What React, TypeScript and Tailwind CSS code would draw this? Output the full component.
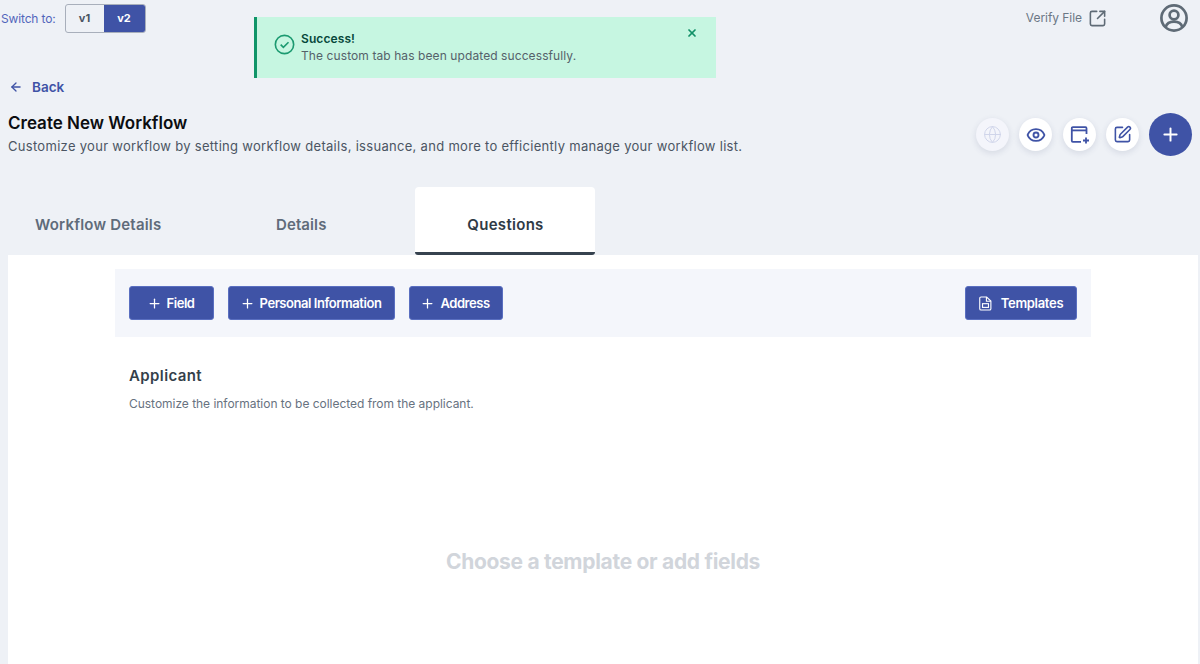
import { ArrowLeft, Eye, Globe, Plus, SquareArrowOutUpRight, SquarePen, X } from "lucide-react";

const font = "font-['Inter','Liberation_Sans',sans-serif]";

function AddButton({ label, className }: { label: string; className: string }) {
  return (
    <button
      className={`flex h-[34px] items-center justify-center gap-[5px] rounded-[3px] border border-[#5a6fc0] bg-[#3f53a6] pr-[2px] pt-[1px] text-[13px] font-semibold tracking-[-0.45px] text-white ${className}`}
    >
      <Plus className="size-[15px]" strokeWidth={2} aria-hidden="true" />
      {label}
    </button>
  );
}

function RoundAction({ children, muted }: { children: React.ReactNode; muted?: boolean }) {
  return (
    <span
      className={`flex size-[33px] items-center justify-center rounded-full shadow-[0_2px_6px_rgba(60,70,110,0.14)] ${
        muted ? "bg-[#f4f5fb] text-[#cfd4ea]" : "bg-white text-[#3f53a6]"
      }`}
    >
      {children}
    </span>
  );
}

function UserCircle() {
  return (
    <svg viewBox="0 0 28 28" className="size-[28px]" fill="none" stroke="#5f6b76" strokeWidth="2.7" aria-hidden="true">
      <circle cx="14" cy="14" r="12.6" />
      <circle cx="14" cy="11" r="4.4" />
      <path d="M5.6 23c1.2-3.6 4.4-5.4 8.4-5.4s7.2 1.8 8.4 5.4" />
    </svg>
  );
}

function FolderPlus() {
  return (
    <svg viewBox="0 0 20 20" className="size-[20px]" fill="none" stroke="currentColor" strokeWidth="1.8" aria-hidden="true">
      <path d="M16.5 9V3.2a1 1 0 0 0-1-1H2.8a1 1 0 0 0-1 1v12.6a1 1 0 0 0 1 1H11" />
      <path d="M1.8 5.4h14.7" />
      <path d="M16 12.5v6M13 15.5h6" />
    </svg>
  );
}

function TemplateIcon() {
  return (
    <svg viewBox="0 0 14 16" className="h-[15px] w-[13px]" fill="none" stroke="white" strokeWidth="1.2" aria-hidden="true">
      <path d="M2.2 1h6l4.6 4.4v8.2a1.4 1.4 0 0 1-1.4 1.4H2.2a1.4 1.4 0 0 1-1.4-1.4V2.4A1.4 1.4 0 0 1 2.2 1Z" />
      <path d="M8 1v4.6h4.8" />
      <rect x="3.8" y="8.2" width="6.4" height="4" />
    </svg>
  );
}

export default function App() {
  return (
    <div className={`${font} relative h-[664px] w-[1200px] overflow-hidden bg-[#eef1f6]`}>
      {/* top bar */}
      <header className="flex h-[37px] items-start justify-between pl-[1px] pr-[12px] pt-[4px]">
        <div className="flex items-center gap-[9px]">
          <span className="text-[12px] tracking-[-0.15px] text-[#5266bb]">Switch to:</span>
          <div className="flex h-[29px] overflow-hidden rounded-[3px] border border-[#a8afbb] text-[11px] font-bold">
            <span className="flex w-[38px] items-center justify-center text-[#4a5563]">v1</span>
            <span className="flex w-[41px] items-center justify-center bg-[#3f53a6] text-white">v2</span>
          </div>
        </div>
        <div className="flex items-center">
          <span className="text-[12px] tracking-[-0.05px] text-[#6b7785]">Verify File</span>
          <SquareArrowOutUpRight className="ml-[6px] size-[19px] text-[#5f6b76]" strokeWidth={2} aria-hidden="true" />
          <span className="ml-[53px]"><UserCircle /></span>
        </div>
      </header>

      {/* toast */}
      <div className="absolute left-[254px] top-[17px] flex h-[61px] w-[462px] border-l-[3px] border-[#0f9568] bg-[#c6f6e1] pl-[17px] pt-[13px]">
        <svg viewBox="0 0 22 22" className="mt-[4px] size-[21px]" fill="none" stroke="#1b9a70" strokeWidth="1.7" aria-hidden="true">
          <circle cx="11" cy="11" r="9.6" />
          <path d="M7 11.2l2.8 2.8L15.2 8.6" />
        </svg>
        <div className="ml-[6px] text-[12px] leading-[17px]">
          <p className="font-semibold tracking-[0.1px] text-[#06483a]">Success!</p>
          <p className="tracking-[0.09px] text-[#55616a]">The custom tab has been updated successfully.</p>
        </div>
        <X className="absolute right-[18px] top-[10px] size-[12px] text-[#129068]" strokeWidth={3.5} aria-hidden="true" />
      </div>

      {/* back link + title */}
      <div className="mt-[41px] flex items-center gap-[9px] pl-[9px] text-[13.5px] font-semibold leading-[18px] text-[#3f53a6]">
        <ArrowLeft className="size-[14px]" strokeWidth={2.25} aria-hidden="true" />
        Back
      </div>
      <div className="mt-[17px] flex items-start justify-between pl-[8px] pr-[8px]">
        <div>
          <h1 className="text-[17px] font-semibold leading-[20px] text-[#0b0d10]">Create New Workflow</h1>
          <p className="mt-[3px] text-[13px] leading-[20px] tracking-[0.3px] text-[#4b5563]">
            Customize your workflow by setting workflow details, issuance, and more to efficiently manage your workflow list.
          </p>
        </div>
        <div className="flex items-center">
          <RoundAction muted><Globe className="size-[19px]" strokeWidth={1.25} aria-hidden="true" /></RoundAction>
          <span className="ml-[10px]"><RoundAction><Eye className="size-[20px]" strokeWidth={2.25} aria-hidden="true" /></RoundAction></span>
          <span className="ml-[11px]"><RoundAction><FolderPlus /></RoundAction></span>
          <span className="ml-[10px]"><RoundAction><SquarePen className="size-[19px]" strokeWidth={2} aria-hidden="true" /></RoundAction></span>
          <span className="ml-[10px] flex size-[43px] items-center justify-center rounded-full bg-[#3f53a6] text-white">
            <Plus className="size-[21px]" strokeWidth={2.25} aria-hidden="true" />
          </span>
        </div>
      </div>

      {/* tabs */}
      <nav className="mt-[31px] flex h-[68px] items-stretch text-[15px] font-semibold">
        <span className="ml-[35px] flex w-[126px] items-center whitespace-nowrap pt-[8px] tracking-[0.2px] text-[#5f6b7a]">Workflow Details</span>
        <span className="ml-[115px] flex items-center pt-[8px] tracking-[0.1px] text-[#5f6b7a]">Details</span>
        <span className="ml-[89px] flex w-[180px] items-center justify-center rounded-t-[4px] rounded-b-[3px] border-b-[3px] border-[#36424f] bg-white pt-[11px] tracking-[0.3px] text-[#2f3a46]">
          Questions
        </span>
      </nav>

      {/* panel */}
      <main className="ml-[8px] mr-[2px] h-[409px] bg-white pl-[107px] pt-[14px]">
        <div className="flex h-[68px] w-[976px] items-center justify-between bg-[#f4f6fb] pl-[14px] pr-[14px]">
          <div className="flex gap-[14px]">
            <AddButton label="Field" className="w-[85px]" />
            <AddButton label="Personal Information" className="w-[167px]" />
            <AddButton label="Address" className="w-[94px]" />
          </div>
          <button className="flex h-[34px] w-[112px] items-center justify-center gap-[9px] rounded-[3px] border border-[#5a6fc0] bg-[#3f53a6] pt-[1px] text-[13px] font-semibold tracking-[-0.3px] text-white">
            <TemplateIcon />
            Templates
          </button>
        </div>
        <div className="pl-[14px] pt-[29px]">
          <h2 className="text-[15px] font-semibold leading-[20px] tracking-[0.4px] text-[#353f4b]">Applicant</h2>
          <p className="mt-[9px] text-[12px] leading-[18px] tracking-[-0.03px] text-[#67727f]">
            Customize the information to be collected from the applicant.
          </p>
        </div>
        <p className="mt-[135px] w-[976px] text-center text-[21px] font-bold leading-[28px] tracking-[-0.3px] text-[#d1d5db]">
          Choose a template or add fields
        </p>
      </main>
    </div>
  );
}
